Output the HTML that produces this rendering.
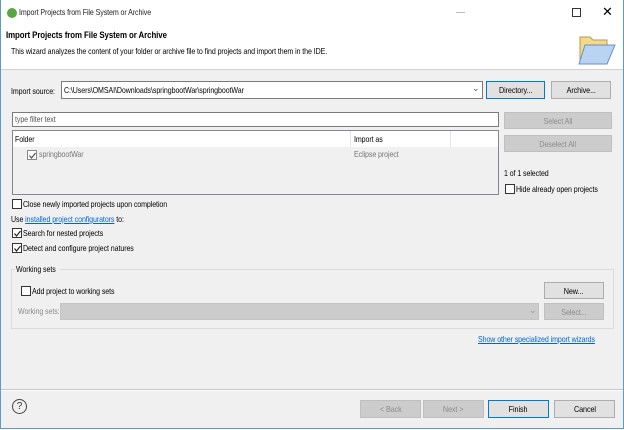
<!DOCTYPE html>
<html><head><meta charset="utf-8"><style>
*{box-sizing:border-box;margin:0;padding:0}
body{width:624px;height:430px;background:#fff;font-family:"Liberation Sans",sans-serif;font-size:8.5px;letter-spacing:-0.1px;color:#000;position:relative;overflow:hidden}
.a{position:absolute;white-space:nowrap}
.t{transform:scaleX(.83);transform-origin:0 0}
.win{position:absolute;left:0;top:0;width:624px;height:429px;border:1px solid #5b9bd5;border-top:none;background:#f0f0f0}
.btn{position:absolute;background:#e1e1e1;border:1px solid #adadad;text-align:center;line-height:16px;font-size:8.5px}
.btn span{display:inline-block;transform:scaleX(.85)}
.btn.dis{background:#cccccc;border-color:#bfbfbf;color:#8c8c8c}
.btn.def{border-color:#0078d7}
.cb{position:absolute;width:10px;height:10px;border:1px solid #333;background:#fff}
.cb svg{position:absolute;left:0;top:0}
</style></head><body>
<div class="win">
<div class="a" style="left:0;top:0;width:622px;height:70px;background:#fff;border-bottom:1px solid #d0d0d0"></div>
<div class="a" style="left:6px;top:8px;width:10px;height:10px;border-radius:50%;background:#5aa642"></div>
<div class="a t" style="left:18px;top:7px;color:#222">Import Projects from File System or Archive</div>
<div class="a" style="left:455px;top:12px;width:9px;height:1px;background:#bbb"></div>
<div class="a" style="left:571px;top:8px;width:9px;height:9px;border:1px solid #333"></div>
<div class="a" style="left:601px;top:4px;font-size:13px">✕</div>
<div class="a t" style="left:5px;top:30px;font-weight:bold;font-size:9.5px">Import Projects from File System or Archive</div>
<div class="a t" style="left:10px;top:46px">This wizard analyzes the content of your folder or archive file to find projects and import them in the IDE.</div>
<svg class="a" style="left:576px;top:31px" width="40" height="36"><path d="M3 6h10l3 3h14v24H3z" fill="#f3d98a" stroke="#b39a4e"/><path d="M8 14h30l-8 19H2z" fill="#b9d4f2" stroke="#6d8fbd"/></svg>
<div class="a t" style="left:10px;top:86px">Import source:</div>
<div class="a" style="left:60px;top:81px;width:422px;height:18px;background:#fff;border:1px solid #7a7a7a"></div>
<div class="a t" style="left:63px;top:85px">C:\Users\OMSAI\Downloads\springbootWar\springbootWar</div>
<div class="a" style="left:471px;top:83px;font-size:9px;color:#555">⌄</div>
<div class="btn def" style="left:485px;top:81px;width:59px;height:18px"><span>Directory...</span></div>
<div class="btn" style="left:550px;top:81px;width:60px;height:18px"><span>Archive...</span></div>
<div class="a" style="left:11px;top:112px;width:487px;height:15px;background:#fff;border:1px solid #7a7a7a"></div>
<div class="a t" style="left:14px;top:114px;color:#555">type filter text</div>
<div class="btn dis" style="left:503px;top:112px;width:108px;height:17px"><span>Select All</span></div>
<div class="btn dis" style="left:503px;top:135px;width:108px;height:17px"><span>Deselect All</span></div>
<div class="a" style="left:11px;top:130px;width:487px;height:65px;border:1px solid #828790;background:#f0f0f0"></div>
<div class="a" style="left:12px;top:131px;width:485px;height:16px;background:#fff"></div>
<div class="a" style="left:349px;top:131px;width:1px;height:16px;background:#e5e5e5"></div>
<div class="a" style="left:449px;top:131px;width:1px;height:16px;background:#e5e5e5"></div>
<div class="a t" style="left:14px;top:134px">Folder</div>
<div class="a t" style="left:353px;top:134px">Import as</div>
<div class="cb" style="left:26px;top:150px;border-color:#888"><svg width="9" height="9"><path d="M1.5 4.5l2 2.5 4-5" fill="none" stroke="#555" stroke-width="1.2"/></svg></div>
<div class="a t" style="left:38px;top:149px;color:#777">springbootWar</div>
<div class="a t" style="left:353px;top:149px;color:#777">Eclipse project</div>
<div class="a t" style="left:503px;top:168px">1 of 1 selected</div>
<div class="cb" style="left:504px;top:184px"></div>
<div class="a t" style="left:515px;top:184px">Hide already open projects</div>
<div class="cb" style="left:11px;top:199px"></div>
<div class="a t" style="left:22px;top:199px">Close newly imported projects upon completion</div>
<div class="a t" style="left:10px;top:214px">Use <span style="color:#0066cc;text-decoration:underline">installed project configurators</span> to:</div>
<div class="cb" style="left:11px;top:228px"><svg width="9" height="9"><path d="M1.5 4.5l2 2.5 4-5" fill="none" stroke="#222" stroke-width="1.2"/></svg></div>
<div class="a t" style="left:22px;top:228px">Search for nested projects</div>
<div class="cb" style="left:11px;top:243px"><svg width="9" height="9"><path d="M1.5 4.5l2 2.5 4-5" fill="none" stroke="#222" stroke-width="1.2"/></svg></div>
<div class="a t" style="left:22px;top:243px">Detect and configure project natures</div>
<div class="a" style="left:10px;top:269px;width:603px;height:60px;border:1px solid #dcdcdc"></div>
<div class="a" style="left:14px;top:264px;width:45px;height:10px;background:#f0f0f0"></div>
<div class="a t" style="left:15px;top:264px">Working sets</div>
<div class="cb" style="left:20px;top:286px"></div>
<div class="a t" style="left:31px;top:286px">Add project to working sets</div>
<div class="btn" style="left:543px;top:282px;width:60px;height:17px"><span>New...</span></div>
<div class="a t" style="left:17px;top:306px;color:#8c8c8c">Working sets:</div>
<div class="a" style="left:59px;top:303px;width:479px;height:17px;background:#ccc;border:1px solid #c4c4c4"></div>
<div class="a" style="left:528px;top:305px;font-size:9px;color:#999">⌄</div>
<div class="btn dis" style="left:543px;top:303px;width:60px;height:17px"><span>Select...</span></div>
<div class="a t" style="left:477px;top:334px;color:#0066cc;text-decoration:underline">Show other specialized import wizards</div>
<div class="a" style="left:0;top:389px;width:622px;height:1px;background:#c8c8c8"></div>
<div class="a" style="left:0;top:390px;width:622px;height:1px;background:#fff"></div>
<div class="a" style="left:11px;top:399px;width:15px;height:15px;border:1px solid #444;border-radius:50%;text-align:center;line-height:13px;font-size:10px;color:#333">?</div>
<div class="btn dis" style="left:359px;top:400px;width:61px;height:18px"><span>&lt; Back</span></div>
<div class="btn dis" style="left:422px;top:400px;width:61px;height:18px"><span>Next &gt;</span></div>
<div class="btn def" style="left:487px;top:400px;width:61px;height:18px"><span>Finish</span></div>
<div class="btn" style="left:553px;top:400px;width:61px;height:18px"><span>Cancel</span></div>
</div>
</body></html>
